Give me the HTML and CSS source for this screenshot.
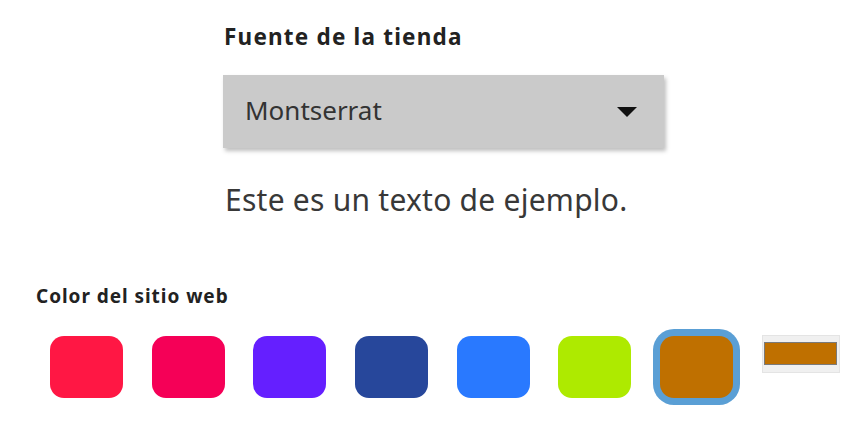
FILE: index.html
```html
<!DOCTYPE html>
<html lang="es">
<head>
<meta charset="utf-8">
<title>Ajustes de la tienda</title>
<link rel="stylesheet" href="styles.css">
</head>
<body>
<div class="page">
  <section class="font-section">
    <h2 class="font-label">Fuente de la tienda</h2>
    <div class="select">
      <span class="select-value">Montserrat</span>
      <span class="caret"></span>
    </div>
    <p class="sample">Este es un texto de ejemplo.</p>
  </section>
  <section class="color-section">
    <h3 class="color-label">Color del sitio web</h3>
    <div class="swatches">
      <span class="swatch c1"></span>
      <span class="swatch c2"></span>
      <span class="swatch c3"></span>
      <span class="swatch c4"></span>
      <span class="swatch c5"></span>
      <span class="swatch c6"></span>
      <span class="swatch c7 selected"></span>
      <span class="color-input"><span class="color-input-fill"></span></span>
    </div>
  </section>
</div>
</body>
</html>
```
FILE: styles.css
```css
html, body {
  margin: 0;
  padding: 0;
  background: #ffffff;
}

.page {
  width: 868px;
  height: 427px;
  overflow: hidden;
}

.font-section {
  margin-left: 223px;
  width: 441px;
  padding-top: 25px;
}

.font-label {
  margin: 0;
  font-family: "Noto Sans", "Open Sans", sans-serif;
  font-weight: 700;
  font-size: 22.5px;
  letter-spacing: 1.2px;
  line-height: 24px;
  color: #222222;
  padding-left: 1px;
}

.select {
  margin-top: 26px;
  height: 73px;
  background: #cacaca;
  box-shadow: 2px 3px 4px rgba(0, 0, 0, 0.25);
  display: flex;
  align-items: flex-start;
  justify-content: space-between;
  padding: 0 27px 0 22px;
  box-sizing: border-box;
}

.select-value {
  font-family: "Noto Sans", "Open Sans", sans-serif;
  font-size: 26px;
  line-height: 70px;
  color: #333333;
}

.caret {
  width: 0;
  height: 0;
  margin-top: 32px;
  border-left: 10px solid transparent;
  border-right: 10px solid transparent;
  border-top: 10px solid #111111;
}

.sample {
  margin: 34px 0 0 2px;
  font-family: "Noto Sans", "Open Sans", sans-serif;
  font-size: 30px;
  letter-spacing: 0.25px;
  line-height: 36px;
  color: #383838;
}

.color-section {
  margin-top: 67px;
  margin-left: 36px;
}

.color-label {
  margin: 0;
  font-family: "Noto Sans", "Open Sans", sans-serif;
  font-weight: 700;
  font-size: 19px;
  letter-spacing: 0.95px;
  line-height: 22px;
  color: #222222;
}

.swatches {
  margin-top: 29px;
  padding-left: 14px;
  display: flex;
  align-items: flex-start;
  gap: 28.7px;
}

.swatch {
  display: block;
  width: 73px;
  height: 62px;
  border-radius: 14px;
}

.swatch.selected {
  box-shadow: 0 0 0 7px #5a9fd5;
  border-radius: 14px;
}

.c1 { background: #ff1744; }
.c2 { background: #f50057; }
.c3 { background: #651fff; }
.c4 { background: #27479b; }
.c5 { background: #2979ff; }
.c6 { background: #aeea00; }
.c7 { background: #bf7000; }

.color-input {
  display: block;
  width: 78px;
  height: 38px;
  margin-top: -1px;
  background: #f0f0f0;
  border: 1px solid #e4e4e4;
  box-sizing: border-box;
  padding: 6px 2px 7px 1px;
}

.color-input-fill {
  display: block;
  height: 100%;
  background: #bf7000;
  border: 1px solid #7a7a7a;
  box-sizing: border-box;
}
```
